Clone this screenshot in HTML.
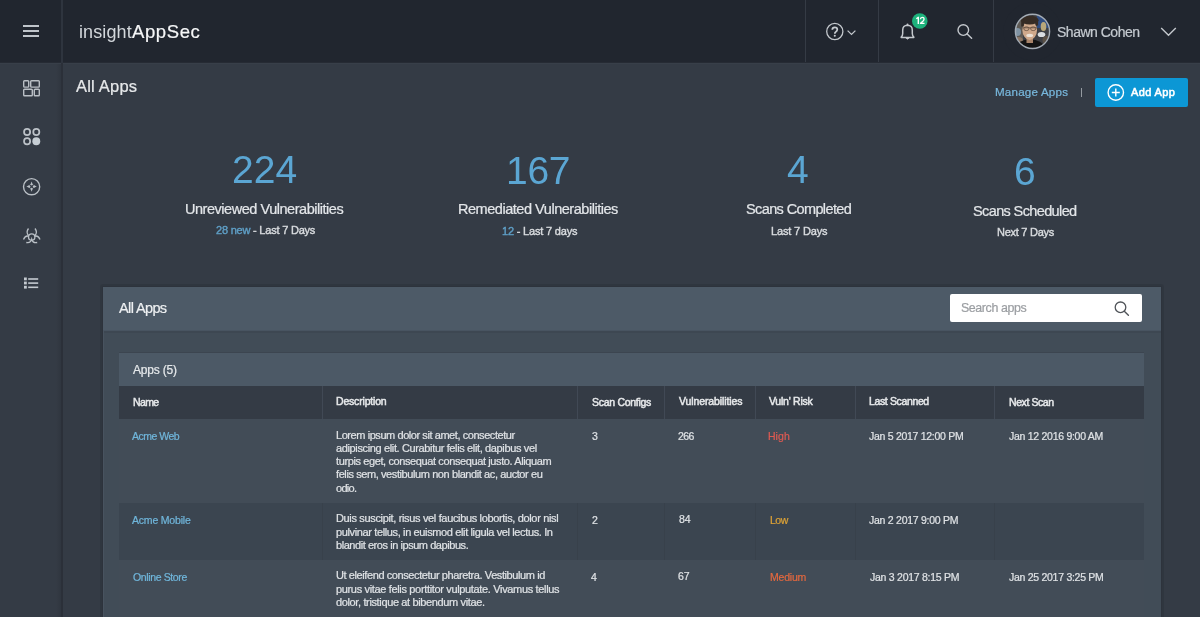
<!DOCTYPE html>
<html><head><meta charset="utf-8">
<style>
*{margin:0;padding:0;box-sizing:border-box}
html,body{width:1200px;height:617px;overflow:hidden;background:#343b45;font-family:"Liberation Sans",sans-serif}
.abs{position:absolute}
#hdr{position:absolute;left:0;top:0;width:1200px;height:62px;background:#21262f}
.tx{position:absolute;white-space:nowrap;line-height:normal;will-change:transform}
</style></head><body>
<div id="hdr"></div>
<div class="abs" style="left:0;top:62px;width:1200px;height:1px;background:#262b34"></div><div class="abs" style="left:0;top:63px;width:1200px;height:1px;background:#383f49"></div>
<div class="abs" style="left:61px;top:0;width:1.5px;height:63px;background:#2e343e"></div>
<div class="abs" style="left:56px;top:64px;width:6px;height:553px;background:linear-gradient(to right,rgba(0,0,0,0),rgba(0,0,0,0.1))"></div><div class="abs" style="left:61px;top:63px;width:1.5px;height:554px;background:#2b3039"></div>
<!-- hamburger -->
<div class="abs" style="left:23px;top:25.4px;width:15.5px;height:1.9px;background:#bfc4ca"></div>
<div class="abs" style="left:23px;top:30.4px;width:15.5px;height:1.9px;background:#bfc4ca"></div>
<div class="abs" style="left:23px;top:35.4px;width:15.5px;height:1.9px;background:#bfc4ca"></div>
<div class="abs" style="left:805px;top:0;width:1px;height:62px;background:#353b45"></div>
<div class="abs" style="left:878px;top:0;width:1px;height:62px;background:#353b45"></div>
<div class="abs" style="left:993px;top:0;width:1px;height:62px;background:#353b45"></div>
<!-- help -->
<svg class="abs" style="left:0;top:0" width="1200" height="62" viewBox="0 0 1200 62">
  <circle cx="834.8" cy="31.5" r="8.1" fill="none" stroke="#c3c7cc" stroke-width="1.3"/>
  <path d="M832.3 29.8 Q832.3 27.4 834.8 27.4 Q837.3 27.4 837.3 29.6 Q837.3 31.1 835.7 31.9 Q834.8 32.4 834.8 33.8" fill="none" stroke="#c8ccd1" stroke-width="1.7"/>
  <circle cx="834.8" cy="35.7" r="1.05" fill="#c8ccd1"/>
  <path d="M847.6 30.6 L851.5 34.4 L855.4 30.6" fill="none" stroke="#c3c7cc" stroke-width="1.3"/>
  <!-- bell -->
  <path d="M901.2 37.6 L913.8 37.6 L913.8 37.1 Q912.3 35.8 912.3 33.5 L912.3 30.2 Q912.3 25.4 907.5 25.3 Q902.7 25.4 902.7 30.2 L902.7 33.5 Q902.7 35.8 901.2 37.1 Z" fill="none" stroke="#c3c7cc" stroke-width="1.5" stroke-linejoin="round"/>
  <path d="M905.8 38 Q907.5 40.3 909.2 38" fill="#c3c7cc" stroke="#c3c7cc" stroke-width="0.8"/>
  <circle cx="907.5" cy="24.6" r="1" fill="#c3c7cc"/>
  <circle cx="919.8" cy="21" r="7.8" fill="#1db27c"/>
  <path d="M916.3 18.7 L918.3 17.3 V24" fill="none" stroke="#fff" stroke-width="1.4" stroke-linejoin="round"/>
  <path d="M920.4 19.2 Q920.5 17.3 922.3 17.3 Q924.1 17.3 924.1 19 Q924.1 20.1 922.9 21.2 L920.5 23.3 H924.5" fill="none" stroke="#fff" stroke-width="1.35" stroke-linejoin="round"/>
  <!-- search -->
  <circle cx="963.3" cy="30.1" r="5.3" fill="none" stroke="#c3c7cc" stroke-width="1.4"/>
  <path d="M967.2 34 L971.6 38.3" stroke="#c3c7cc" stroke-width="1.5" stroke-linecap="round"/>
  <!-- chevron -->
  <path d="M1161.2 28 L1168.5 35.3 L1175.8 28" fill="none" stroke="#c3c7cc" stroke-width="1.4"/>
  <!-- avatar -->
    <g>
    <rect x="1014" y="13" width="37" height="37" fill="#3d3f44"/>
    <rect x="1014" y="13" width="9" height="37" fill="#5e5a55"/>
    <ellipse cx="1017.5" cy="32" rx="3.5" ry="4" fill="#7f93a3"/>
    <ellipse cx="1018.5" cy="40.5" rx="4.5" ry="3.5" fill="#8d7766"/>
    <rect x="1037" y="13" width="15" height="15" fill="#2f4c80"/>
    <ellipse cx="1043.5" cy="26.5" rx="2.8" ry="4.5" fill="#b9a77a"/>
    <ellipse cx="1041.5" cy="34.5" rx="3.8" ry="2.6" fill="#d9dde1"/>
    <ellipse cx="1046.5" cy="40" rx="4" ry="4" fill="#5a5046"/>
    <ellipse cx="1030" cy="47" rx="14" ry="7.5" fill="#141414"/>
    <rect x="1026.5" y="36" width="6.5" height="7" fill="#a9846a"/>
    <ellipse cx="1029.7" cy="30.3" rx="7.3" ry="9.6" fill="#cfa98c"/>
    <ellipse cx="1029.7" cy="20.2" rx="8.8" ry="4.4" fill="#362c25"/>
    <rect x="1021.2" y="19.5" width="2.6" height="7" fill="#362c25"/>
    <rect x="1035.8" y="19.5" width="2.3" height="6" fill="#362c25"/>
    <path d="M1022.6 27.8 H1036.8" stroke="#5a4638" stroke-width="0.8"/>
    <ellipse cx="1026.4" cy="28.7" rx="2.6" ry="1.9" fill="none" stroke="#5a4638" stroke-width="0.7"/>
    <ellipse cx="1033.2" cy="28.7" rx="2.6" ry="1.9" fill="none" stroke="#5a4638" stroke-width="0.7"/>
    <ellipse cx="1029.7" cy="35.4" rx="3.4" ry="1.6" fill="#ece2d8"/>
  </g>
  <circle cx="1032.5" cy="31.4" r="23" fill="none" stroke="#21262f" stroke-width="12"/>
  <circle cx="1032.5" cy="31.4" r="17.1" fill="none" stroke="#a4acb5" stroke-width="1.4"/>
</svg>

<!-- sidebar icons -->
<svg class="abs" style="left:0;top:62px" width="61" height="260" viewBox="0 62 61 260">
  <g fill="none" stroke="#b9bfc5" stroke-width="1.4">
    <rect x="23.7" y="80.7" width="5" height="6.4" rx="0.8"/>
    <rect x="30.7" y="80.7" width="8.6" height="6.4" rx="0.8"/>
    <rect x="23.7" y="89.3" width="8.6" height="6.4" rx="0.8"/>
    <rect x="34.3" y="89.3" width="5" height="6.4" rx="0.8"/>
    </g><g fill="none" stroke="#bcc2c8" stroke-width="1.75"><circle cx="27.1" cy="132" r="3.05"/><circle cx="36.3" cy="132" r="3.05"/><circle cx="27.1" cy="141.2" r="3.05"/></g><g fill="none" stroke="#b9bfc5" stroke-width="1.4">
    <circle cx="31.6" cy="186.7" r="8.1"/>
  </g>
  <circle cx="36.3" cy="141.2" r="3.95" fill="#c6ced4"/>
  <path d="M31.6 181.4 Q32.4 184.3 33.5 184.6 Q34.3 185.6 36.8 186.6 Q34.3 187.6 33.5 188.6 Q32.4 188.9 31.6 191.8 Q30.8 188.9 29.7 188.6 Q28.9 187.6 26.4 186.6 Q28.9 185.6 29.7 184.6 Q30.8 184.3 31.6 181.4 Z" fill="#b9bfc5"/>
  <path d="M29.3 184.3 L33.9 188.9 M33.9 184.3 L29.3 188.9" stroke="#343b45" stroke-width="1.1"/><circle cx="31.6" cy="186.6" r="1.1" fill="#343b45"/>
  <g fill="none" stroke="#b9bfc5" stroke-width="1.3">
    <path d="M28.5 228.5 Q25.6 232.3 28.6 235.7"/><path d="M35 228.5 Q37.9 232.3 34.9 235.7"/>
    <circle cx="31.7" cy="237" r="3.2"/>
    <path d="M23.5 239.5 Q25.3 235 29 236.3"/><path d="M40 239.5 Q38.2 235 34.5 236.3"/>
    <path d="M26.3 242.5 Q30.5 243.5 31.7 239.2 Q33 243.5 37.2 242.5"/>
  </g>
  <g fill="#c4cad0">
    <rect x="24" y="277.5" width="2.8" height="2.8"/><rect x="24" y="281.6" width="2.8" height="2.8"/><rect x="24" y="285.8" width="2.8" height="2.8"/>
    <rect x="28.2" y="278.2" width="10" height="1.6"/><rect x="28.2" y="282.3" width="10" height="1.6"/><rect x="28.2" y="286.5" width="10" height="1.6"/>
  </g>
</svg>

<div class="abs" style="left:1080.5px;top:87.6px;width:1.2px;height:9.8px;background:#959ba1"></div>
<div class="abs" style="left:1095px;top:78.3px;width:93.4px;height:28.3px;background:#0c97d5;border-radius:2px"></div>
<svg class="abs" style="left:1095px;top:78px" width="40" height="30" viewBox="1095 78 40 30">
  <circle cx="1115.8" cy="92.5" r="7.7" fill="none" stroke="#fff" stroke-width="1.4"/>
  <path d="M1115.8 88.4 V96.5 M1111.8 92.5 H1119.8" stroke="#fff" stroke-width="1.4"/>
</svg>

<!-- panel -->
<div class="abs" style="left:100px;top:284px;width:1064px;height:340px;background:rgba(0,0,0,0.08);border-radius:3px"></div>
<div class="abs" style="left:102px;top:286px;width:1060px;height:340px;background:#2d333c"></div>
<div class="abs" style="left:103px;top:287px;width:1058px;height:340px;background:#414c57"></div>
<div class="abs" style="left:103px;top:287px;width:1058px;height:43px;background:#4d5a67"></div>
<div class="abs" style="left:103px;top:330px;width:1058px;height:1px;background:#485461"></div><div class="abs" style="left:103px;top:331px;width:1058px;height:2px;background:#3d4752"></div><div class="abs" style="left:103px;top:331px;width:1px;height:300px;background:#48535f"></div>
<div class="abs" style="left:950px;top:294.3px;width:191.8px;height:27.8px;background:#fff;border-radius:2px"></div>
<svg class="abs" style="left:1105px;top:295px" width="30" height="26" viewBox="1105 295 30 26">
  <circle cx="1120.5" cy="307.3" r="5.3" fill="none" stroke="#505459" stroke-width="1.3"/>
  <path d="M1124.3 311.2 L1128.4 315.2" stroke="#505459" stroke-width="1.4" stroke-linecap="round"/>
</svg>
<!-- inner table -->
<div class="abs" style="left:119px;top:352px;width:1025px;height:1px;background:#3c4550"></div>
<div class="abs" style="left:119px;top:353px;width:1025px;height:33px;background:#4c5966"></div>
<div class="abs" style="left:119px;top:386px;width:1025px;height:33px;background:#343b45"></div>
<div class="abs" style="left:322px;top:386px;width:1px;height:33px;background:#414955"></div>
<div class="abs" style="left:577px;top:386px;width:1px;height:33px;background:#414955"></div>
<div class="abs" style="left:664px;top:386px;width:1px;height:33px;background:#414955"></div>
<div class="abs" style="left:755px;top:386px;width:1px;height:33px;background:#414955"></div>
<div class="abs" style="left:855px;top:386px;width:1px;height:33px;background:#414955"></div>
<div class="abs" style="left:994px;top:386px;width:1px;height:33px;background:#414955"></div>
<div class="abs" style="left:119px;top:419px;width:1025px;height:84px;background:#424c57"></div>
<div class="abs" style="left:119px;top:503px;width:1025px;height:57px;background:#3b4550"></div>
<div class="abs" style="left:322px;top:503px;width:1px;height:57px;background:#38414b"></div>
<div class="abs" style="left:577px;top:503px;width:1px;height:57px;background:#38414b"></div>
<div class="abs" style="left:664px;top:503px;width:1px;height:57px;background:#38414b"></div>
<div class="abs" style="left:755px;top:503px;width:1px;height:57px;background:#38414b"></div>
<div class="abs" style="left:855px;top:503px;width:1px;height:57px;background:#38414b"></div>
<div class="abs" style="left:994px;top:503px;width:1px;height:57px;background:#38414b"></div>
<div class="abs" style="left:119px;top:560px;width:1025px;height:60px;background:#424c57"></div>

<div class="tx" id="logo1" style="left:78.50px;top:21.80px;font-size:18px;color:#d3d7db;letter-spacing:0.120px;">insight</div>
<div class="tx" id="logo2" style="left:131.50px;top:20.80px;font-size:18.5px;color:#f6f7f8;-webkit-text-stroke:0.22px;letter-spacing:0.612px;">AppSec</div>
<div class="tx" id="user" style="left:1057.11px;top:23.90px;font-size:14px;color:#c5cad0;-webkit-text-stroke:0.22px;letter-spacing:-0.492px;">Shawn Cohen</div>
<div class="tx" id="title" style="left:76.49px;top:76.71px;font-size:16.5px;color:#e6e8ea;-webkit-text-stroke:0.22px;letter-spacing:0.211px;">All Apps</div>
<div class="tx" id="manage" style="left:995.38px;top:84.82px;font-size:11.6px;color:#78b8dd;-webkit-text-stroke:0.22px;letter-spacing:0.204px;">Manage Apps</div>
<div class="tx" id="addapp" style="left:1131.40px;top:85.81px;font-size:11px;color:#ffffff;-webkit-text-stroke:0.55px;letter-spacing:0.360px;">Add App</div>
<div class="tx" id="n1" style="left:231.84px;top:147.72px;font-size:39px;color:#5ba6d3;letter-spacing:0.120px;">224</div>
<div class="tx" id="l1" style="left:185.38px;top:200.50px;font-size:14.5px;color:#e3e6e9;-webkit-text-stroke:0.22px;letter-spacing:-0.466px;">Unreviewed Vulnerabilities</div>
<div class="tx" id="s1" style="left:215.73px;top:224.31px;font-size:11px;color:#d9dcdf;-webkit-text-stroke:0.4px;letter-spacing:-0.211px;"><span style="color:#5f9fc6">28 new</span> - Last 7 Days</div>
<div class="tx" id="n2" style="left:505.52px;top:149.32px;font-size:39px;color:#5ba6d3;letter-spacing:-0.300px;">167</div>
<div class="tx" id="l2" style="left:458.38px;top:201.30px;font-size:14.5px;color:#e3e6e9;-webkit-text-stroke:0.22px;letter-spacing:-0.464px;">Remediated Vulnerabilities</div>
<div class="tx" id="s2" style="left:502.49px;top:224.81px;font-size:11px;color:#d9dcdf;-webkit-text-stroke:0.4px;letter-spacing:-0.181px;"><span style="color:#5f9fc6">12</span> - Last 7 days</div>
<div class="tx" id="n3" style="left:786.57px;top:147.72px;font-size:39px;color:#5ba6d3;">4</div>
<div class="tx" id="l3" style="left:745.84px;top:201.30px;font-size:14.5px;color:#e3e6e9;-webkit-text-stroke:0.22px;letter-spacing:-0.617px;">Scans Completed</div>
<div class="tx" id="s3" style="left:771.27px;top:224.60px;font-size:11px;color:#d9dcdf;-webkit-text-stroke:0.4px;letter-spacing:-0.160px;">Last 7 Days</div>
<div class="tx" id="n4" style="left:1014.11px;top:149.72px;font-size:39px;color:#5ba6d3;">6</div>
<div class="tx" id="l4" style="left:972.92px;top:203.30px;font-size:14.5px;color:#e3e6e9;-webkit-text-stroke:0.22px;letter-spacing:-0.620px;">Scans Scheduled</div>
<div class="tx" id="s4" style="left:997.00px;top:226.10px;font-size:11px;color:#d9dcdf;-webkit-text-stroke:0.4px;letter-spacing:-0.264px;">Next 7 Days</div>
<div class="tx" id="ptitle" style="left:119.33px;top:300.00px;font-size:14.5px;color:#eef0f2;-webkit-text-stroke:0.22px;letter-spacing:-0.611px;">All Apps</div>
<div class="tx" id="search" style="left:961.33px;top:300.81px;font-size:12.4px;color:#9b9ea2;-webkit-text-stroke:0.22px;letter-spacing:-0.392px;">Search apps</div>
<div class="tx" id="apps5" style="left:133.30px;top:362.82px;font-size:12px;color:#e6e9eb;-webkit-text-stroke:0.22px;letter-spacing:-0.189px;">Apps (5)</div>
<div class="tx" id="h1" style="left:133.00px;top:396.20px;font-size:10.5px;color:#e6e8ea;-webkit-text-stroke:0.5px;letter-spacing:-0.620px;">Name</div>
<div class="tx" id="h2" style="left:336.30px;top:395.00px;font-size:10.5px;color:#e6e8ea;-webkit-text-stroke:0.5px;letter-spacing:-0.185px;">Description</div>
<div class="tx" id="h3" style="left:591.80px;top:396.20px;font-size:10.5px;color:#e6e8ea;-webkit-text-stroke:0.5px;letter-spacing:-0.293px;">Scan Configs</div>
<div class="tx" id="h4" style="left:678.50px;top:395.31px;font-size:10.5px;color:#e6e8ea;-webkit-text-stroke:0.5px;letter-spacing:-0.110px;">Vulnerabilities</div>
<div class="tx" id="h5" style="left:769.10px;top:395.31px;font-size:10.5px;color:#e6e8ea;-webkit-text-stroke:0.5px;letter-spacing:-0.240px;">Vuln' Risk</div>
<div class="tx" id="h6" style="left:868.80px;top:395.31px;font-size:10.5px;color:#e6e8ea;-webkit-text-stroke:0.5px;letter-spacing:-0.364px;">Last Scanned</div>
<div class="tx" id="h7" style="left:1009.00px;top:395.50px;font-size:10.5px;color:#e6e8ea;-webkit-text-stroke:0.5px;letter-spacing:-0.417px;">Next Scan</div>
<div class="tx" id="r1n" style="left:132.11px;top:430.20px;font-size:10.5px;color:#70b6db;-webkit-text-stroke:0.22px;letter-spacing:-0.509px;">Acme Web</div>
<div class="tx" id="r1d1" style="left:336.00px;top:429.00px;font-size:11px;color:#dfe2e5;-webkit-text-stroke:0.22px;letter-spacing:-0.432px;">Lorem ipsum dolor sit amet, consectetur</div>
<div class="tx" id="r1d2" style="left:336.00px;top:442.00px;font-size:11px;color:#dfe2e5;-webkit-text-stroke:0.22px;letter-spacing:-0.363px;">adipiscing elit. Curabitur felis elit, dapibus vel</div>
<div class="tx" id="r1d3" style="left:336.00px;top:455.00px;font-size:11px;color:#dfe2e5;-webkit-text-stroke:0.22px;letter-spacing:-0.389px;">turpis eget, consequat consequat justo. Aliquam</div>
<div class="tx" id="r1d4" style="left:336.00px;top:468.41px;font-size:11px;color:#dfe2e5;-webkit-text-stroke:0.22px;letter-spacing:-0.409px;">felis sem, vestibulum non blandit ac, auctor eu</div>
<div class="tx" id="r1d5" style="left:336.00px;top:481.60px;font-size:11px;color:#dfe2e5;-webkit-text-stroke:0.22px;letter-spacing:-0.700px;">odio.</div>
<div class="tx" id="r1c" style="left:592.11px;top:430.20px;font-size:10.5px;color:#dfe2e5;-webkit-text-stroke:0.22px;">3</div>
<div class="tx" id="r1v" style="left:678.27px;top:429.81px;font-size:10.5px;color:#dfe2e5;-webkit-text-stroke:0.22px;letter-spacing:-0.620px;">266</div>
<div class="tx" id="r1r" style="left:768.18px;top:430.22px;font-size:10.5px;color:#de5a52;-webkit-text-stroke:0.22px;letter-spacing:0.040px;">High</div>
<div class="tx" id="r1l" style="left:868.57px;top:429.81px;font-size:10.5px;color:#dfe2e5;-webkit-text-stroke:0.22px;letter-spacing:-0.287px;">Jan 5 2017 12:00 PM</div>
<div class="tx" id="r1x" style="left:1009.30px;top:429.81px;font-size:10.5px;color:#dfe2e5;-webkit-text-stroke:0.22px;letter-spacing:-0.276px;">Jan 12 2016 9:00 AM</div>
<div class="tx" id="r2n" style="left:131.92px;top:513.70px;font-size:10.5px;color:#70b6db;-webkit-text-stroke:0.22px;letter-spacing:-0.192px;">Acme Mobile</div>
<div class="tx" id="r2d1" style="left:336.00px;top:512.10px;font-size:11px;color:#dfe2e5;-webkit-text-stroke:0.22px;letter-spacing:-0.344px;">Duis suscipit, risus vel faucibus lobortis, dolor nisl</div>
<div class="tx" id="r2d2" style="left:336.00px;top:525.60px;font-size:11px;color:#dfe2e5;-webkit-text-stroke:0.22px;letter-spacing:-0.371px;">pulvinar tellus, in euismod elit ligula vel lectus. In</div>
<div class="tx" id="r2d3" style="left:336.00px;top:538.76px;font-size:11px;color:#dfe2e5;-webkit-text-stroke:0.22px;letter-spacing:-0.443px;">blandit eros in ipsum dapibus.</div>
<div class="tx" id="r2c" style="left:591.73px;top:514.00px;font-size:10.5px;color:#dfe2e5;-webkit-text-stroke:0.22px;">2</div>
<div class="tx" id="r2v" style="left:678.57px;top:513.31px;font-size:10.5px;color:#dfe2e5;-webkit-text-stroke:0.22px;">84</div>
<div class="tx" id="r2r" style="left:770.00px;top:514.00px;font-size:10.5px;color:#dca236;-webkit-text-stroke:0.22px;letter-spacing:-0.470px;">Low</div>
<div class="tx" id="r2l" style="left:868.57px;top:514.00px;font-size:10.5px;color:#dfe2e5;-webkit-text-stroke:0.22px;letter-spacing:-0.259px;">Jan 2 2017 9:00 PM</div>
<div class="tx" id="r3n" style="left:132.73px;top:570.60px;font-size:10.5px;color:#70b6db;-webkit-text-stroke:0.22px;letter-spacing:-0.371px;">Online Store</div>
<div class="tx" id="r3d1" style="left:336.00px;top:569.01px;font-size:11px;color:#dfe2e5;-webkit-text-stroke:0.22px;letter-spacing:-0.407px;">Ut eleifend consectetur pharetra. Vestibulum id</div>
<div class="tx" id="r3d2" style="left:336.00px;top:582.51px;font-size:11px;color:#dfe2e5;-webkit-text-stroke:0.22px;letter-spacing:-0.342px;">purus vitae felis porttitor vulputate. Vivamus tellus</div>
<div class="tx" id="r3d3" style="left:336.00px;top:595.60px;font-size:11px;color:#dfe2e5;-webkit-text-stroke:0.22px;letter-spacing:-0.365px;">dolor, tristique at bibendum vitae.</div>
<div class="tx" id="r3c" style="left:591.33px;top:571.00px;font-size:10.5px;color:#dfe2e5;-webkit-text-stroke:0.22px;">4</div>
<div class="tx" id="r3v" style="left:678.27px;top:570.00px;font-size:10.5px;color:#dfe2e5;-webkit-text-stroke:0.22px;">67</div>
<div class="tx" id="r3r" style="left:770.00px;top:570.72px;font-size:10.5px;color:#e2683f;-webkit-text-stroke:0.22px;letter-spacing:-0.200px;">Medium</div>
<div class="tx" id="r3l" style="left:870.30px;top:570.70px;font-size:10.5px;color:#dfe2e5;-webkit-text-stroke:0.22px;letter-spacing:-0.259px;">Jan 3 2017 8:15 PM</div>
<div class="tx" id="r3x" style="left:1008.65px;top:570.60px;font-size:10.5px;color:#dfe2e5;-webkit-text-stroke:0.22px;letter-spacing:-0.278px;">Jan 25 2017 3:25 PM</div>
</body></html>
